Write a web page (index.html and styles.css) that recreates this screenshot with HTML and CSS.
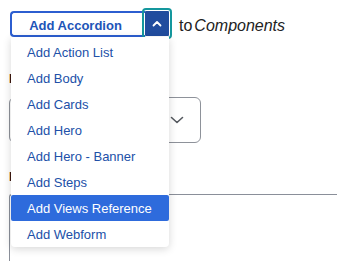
FILE: index.html
```html
<!DOCTYPE html>
<html>
<head>
<meta charset="utf-8">
<link rel="stylesheet" href="styles.css">
</head>
<body>
<div class="page">
  <div class="toolbar">
    <div class="split">
      <button class="split-main">Add Accordion</button>
      <button class="split-toggle" aria-label="Show more">
        <svg width="10" height="7" viewBox="0 0 10 7"><path d="M1.5 5.5 L5 2 L8.5 5.5" fill="none" stroke="#ffffff" stroke-width="1.8" stroke-linecap="round" stroke-linejoin="round"/></svg>
      </button>
    </div>
    <span class="to-text">to<em>Components</em></span>
  </div>

  <div class="label label-first">l</div>
  <div class="select-box">
    <svg class="select-chevron" width="14" height="8" viewBox="0 0 14 8"><path d="M1.5 1.5 L7 6.5 L12.5 1.5" fill="none" stroke="#55595f" stroke-width="1.6" stroke-linecap="round" stroke-linejoin="round"/></svg>
  </div>
  <div class="label label-second">l</div>
  <div class="panel"></div>

  <ul class="menu">
    <li class="menu-item">Add Action List</li>
    <li class="menu-item">Add Body</li>
    <li class="menu-item">Add Cards</li>
    <li class="menu-item">Add Hero</li>
    <li class="menu-item">Add Hero - Banner</li>
    <li class="menu-item">Add Steps</li>
    <li class="menu-item is-active">Add Views Reference</li>
    <li class="menu-item">Add Webform</li>
  </ul>
</div>
</body>
</html>
```

FILE: styles.css
```css
* { box-sizing: border-box; }
html, body { margin: 0; padding: 0; background: #ffffff; }
body {
  width: 337px;
  height: 261px;
  overflow: hidden;
  font-family: "Liberation Sans", Arial, sans-serif;
}
.page {
  position: relative;
  height: 261px;
  overflow: hidden;
  padding-left: 9px;
  padding-top: 11px;
}
.toolbar {
  display: flex;
  align-items: center;
  height: 26px;
  padding-left: 1px;
}
.split {
  display: flex;
  height: 26px;
}
.split-main {
  width: 135px;
  height: 26px;
  margin: 0;
  padding: 3px 6px 0 0;
  border: 2px solid #2c5ed0;
  border-right: none;
  border-radius: 4px 0 0 4px;
  background: #ffffff;
  color: #2154b8;
  font-family: "Liberation Sans", Arial, sans-serif;
  font-weight: bold;
  font-size: 13px;
}
.split-toggle {
  width: 24px;
  height: 25px;
  margin: 0;
  padding: 0;
  border: none;
  border-radius: 1px;
  background: #214c9e;
  outline: 2px solid #14979d;
  outline-offset: 1px;
  display: flex;
  align-items: center;
  justify-content: center;
}
.split-toggle svg { display: block; margin-top: 0; }
.to-text {
  margin-left: 10px;
  padding-top: 4px;
  font-size: 16px;
  color: #222222;
}
.to-text em { margin-left: 2px; }
.label {
  width: 2px;
  height: 16px;
  line-height: 16px;
  font-size: 12px;
  font-weight: bold;
  color: #111111;
  overflow: hidden;
}
.label-first { margin-top: 34px; }
.label-second { margin-top: 26px; }
.select-box {
  margin-top: 10px;
  width: 192px;
  height: 46px;
  border: 1px solid #8e929a;
  border-radius: 6px;
  display: flex;
  align-items: center;
  justify-content: flex-end;
  padding-right: 16px;
}
.select-chevron { display: block; }
.panel {
  margin-top: 9px;
  width: 328px;
  height: 67px;
  border-top: 1px solid #8a8f99;
  border-left: 1px solid #8a8f99;
  border-top-left-radius: 3px;
}
.menu {
  position: absolute;
  left: 11px;
  top: 37px;
  width: 158px;
  margin: 0;
  padding: 2px 0 0 0;
  list-style: none;
  background: #ffffff;
  border-radius: 0 0 4px 4px;
  box-shadow: 0 2px 8px rgba(0, 0, 0, 0.16);
}
.menu-item {
  height: 26px;
  line-height: 26px;
  padding-top: 1px;
  padding-left: 16px;
  font-size: 13px;
  color: #2150a8;
  white-space: nowrap;
}
.menu-item.is-active {
  background: #2e6bdc;
  color: #ffffff;
  border-radius: 2px;
}
```
